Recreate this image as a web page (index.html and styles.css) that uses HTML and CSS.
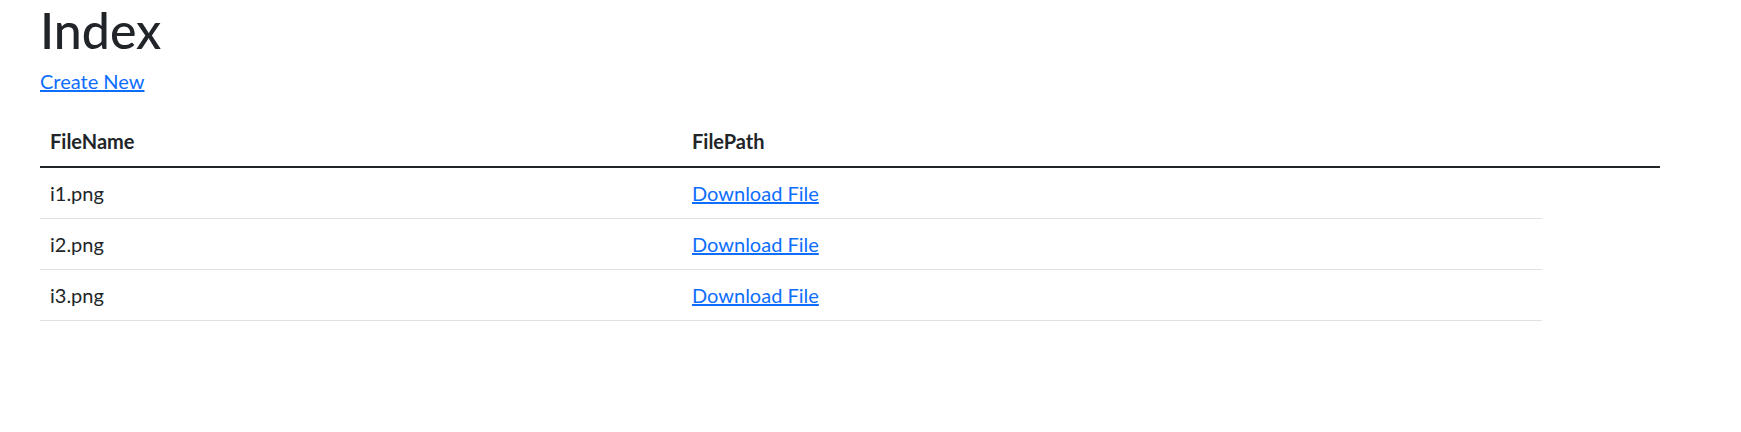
FILE: index.html
```html
<!DOCTYPE html>
<html lang="en">
<head>
<meta charset="utf-8">
<title>Index</title>
<link rel="stylesheet" href="styles.css">
</head>
<body>
<main class="page">
  <h1 class="title">Index</h1>
  <p class="actions"><a href="#">Create New</a></p>
  <table class="files">
    <colgroup>
      <col class="c-name">
      <col class="c-path">
      <col class="c-extra">
    </colgroup>
    <thead>
      <tr>
        <th>FileName</th>
        <th>FilePath</th>
        <th></th>
      </tr>
    </thead>
    <tbody>
      <tr><td>i1.png</td><td><a href="#">Download File</a></td></tr>
      <tr><td>i2.png</td><td><a href="#">Download File</a></td></tr>
      <tr><td>i3.png</td><td><a href="#">Download File</a></td></tr>
    </tbody>
  </table>
</main>
</body>
</html>
```
FILE: styles.css
```css
html, body {
  margin: 0;
  padding: 0;
  background: #fff;
}
body {
  font-family: Lato, "Liberation Sans", sans-serif;
  font-size: 20px;
  line-height: 1.5;
  color: #212529;
}
.page {
  padding-left: 40px;
  width: 1620px;
}
a {
  color: #0d6efd;
  text-decoration: underline;
}
.title {
  margin: 0 0 6px;
  font-size: 50px;
  font-weight: 500;
  line-height: 60px;
}
.actions {
  margin: 0 0 20px;
}
.files {
  width: 1620px;
  border-collapse: collapse;
  table-layout: fixed;
}
.c-name { width: 642px; }
.c-path { width: 860px; }
.c-extra { width: 118px; }
.files th {
  text-align: left;
  font-weight: 700;
  padding: 10px 10px;
  border-bottom: 1px solid #dee2e6;
}
.files tbody {
  border-top: 2px solid #212529;
}
.files td {
  padding: 10px 10px;
  border-bottom: 1px solid #dee2e6;
}
```
